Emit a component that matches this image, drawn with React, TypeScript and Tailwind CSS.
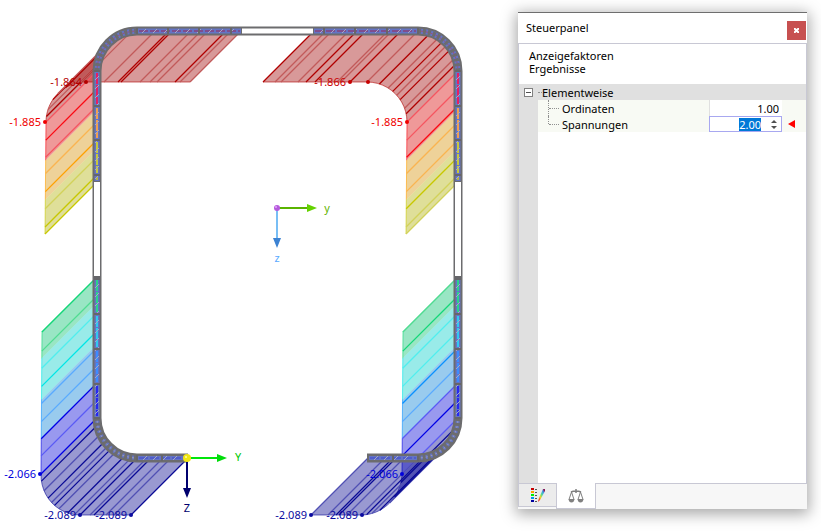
import { useState } from 'react';

type Point = [number, number];

const SHADES = {
  maroon: { fill: '#9e0000', line: '#b00000', soft: '#c25a5a' },
  red: { fill: '#d70000', line: '#fa0a14', soft: '#f55560' },
  orange: { fill: '#d58f00', line: '#ffa000', soft: '#fab450' },
  olive: { fill: '#afaf00', line: '#c8c800', soft: '#d2d25a' },
  green: { fill: '#00c06b', line: '#14d778', soft: '#50dc91' },
  cyan: { fill: '#00cdc8', line: '#00e6e6', soft: '#50eeee' },
  blue: { fill: '#007dd4', line: '#0a91ff', soft: '#5aaaff' },
  indigo: { fill: '#0000d7', line: '#0000e6', soft: '#5a5af5' },
  navy: { fill: '#00008c', line: '#0a0a96', soft: '#5050b4' },
};

type Shade = keyof typeof SHADES;

// Centre line of the section
const LEFT = 97;
const RIGHT = 458;
const TOP = 31;
const BOTTOM = 458;
const R = 40;

// Length of the stress ordinate at a given height
function ordinate(y: number) {
  if (y <= 71) return 51;
  if (y <= 182) return 51 + (y - 71) / 111;
  if (y <= 418) return 55 + (y - 276) / 142;
  return 56 + (y - 418) / 40;
}

function shifted([x, y]: Point): Point {
  const s = ordinate(y);
  return [x - s, y + s];
}

function arc(cx: number, cy: number, from: number, to: number): Point[] {
  const steps = 12;
  return Array.from({ length: steps + 1 }, (_, i) => {
    const a = ((from + ((to - from) * i) / steps) * Math.PI) / 180;
    return [cx + R * Math.cos(a), cy + R * Math.sin(a)];
  });
}

const toPoints = (pts: Point[]) => pts.map((p) => p.join(',')).join(' ');

function Band({ path, shade }: { path: Point[]; shade: Shade }) {
  const outer = path.map(shifted);
  const c = SHADES[shade];
  return (
    <g>
      <polygon points={toPoints([...path, ...outer.slice().reverse()])} fill={c.fill} fillOpacity={0.4} />
      <polyline points={toPoints(outer)} fill="none" stroke={c.line} strokeOpacity={0.6} />
    </g>
  );
}

function Ray({ at, shade, strong }: { at: Point; shade: Shade; strong?: boolean }) {
  const [x2, y2] = shifted(at);
  const c = SHADES[shade];
  return <line x1={at[0]} y1={at[1]} x2={x2} y2={y2} stroke={strong ? c.line : c.soft} strokeWidth={1.3} />;
}

const webBands: [number, number, Shade][] = [
  [71, 109, 'red'],
  [109, 148, 'orange'],
  [148, 182, 'olive'],
  [276, 303, 'green'],
  [303, 344, 'cyan'],
  [344, 383, 'blue'],
  [383, 418, 'indigo'],
];

const webRays: [number, Shade, boolean, boolean][] = [
  [71, 'red', false, false],
  [89, 'red', true, false],
  [106, 'red', false, true],
  [122, 'orange', false, false],
  [140, 'orange', true, false],
  [157, 'olive', false, true],
  [175, 'olive', true, false],
  [182, 'olive', true, false],
  [277, 'green', true, false],
  [296, 'green', false, true],
  [313, 'cyan', false, false],
  [331, 'cyan', true, false],
  [348, 'blue', false, true],
  [366, 'blue', false, false],
  [383, 'indigo', true, false],
  [400, 'indigo', false, true],
  [418, 'indigo', true, false],
];

const flangeRays: [number, number, Shade, boolean][] = [
  [155, TOP, 'maroon', false],
  [169, TOP, 'maroon', true],
  [172, TOP, 'maroon', true],
  [191, TOP, 'maroon', false],
  [201, TOP, 'maroon', false],
  [208, TOP, 'maroon', false],
  [226, TOP, 'maroon', true],
  [231, TOP, 'maroon', false],
  [241, TOP, 'maroon', false],
  [314, TOP, 'maroon', true],
  [326, TOP, 'maroon', false],
  [332, TOP, 'maroon', false],
  [349, TOP, 'maroon', false],
  [357, TOP, 'maroon', true],
  [366, TOP, 'maroon', true],
  [388, TOP, 'maroon', false],
  [392, TOP, 'maroon', false],
  [401, TOP, 'maroon', true],
  [418, TOP, 'maroon', false],
  [137, BOTTOM, 'navy', true],
  [147, BOTTOM, 'navy', false],
  [151, BOTTOM, 'navy', true],
  [163, BOTTOM, 'navy', false],
  [171, BOTTOM, 'navy', false],
  [188, BOTTOM, 'navy', true],
  [368, BOTTOM, 'navy', false],
  [385, BOTTOM, 'navy', false],
  [393, BOTTOM, 'navy', true],
  [396, BOTTOM, 'navy', true],
  [404, BOTTOM, 'navy', false],
  [418, BOTTOM, 'navy', false],
];

const corners: { cx: number; cy: number; shade: Shade; angles: number[] }[] = [
  { cx: 137, cy: 71, shade: 'maroon', angles: [188, 198, 214, 225, 240, 262] },
  { cx: 418, cy: 71, shade: 'maroon', angles: [-72, -58, -50, -42, -34, -20, -12] },
  { cx: 137, cy: 418, shade: 'navy', angles: [170, 156, 144, 136, 130, 122, 108, 98] },
  { cx: 418, cy: 418, shade: 'navy', angles: [82, 74, 62, 45, 34, 22, 12] },
];

const profileOutline =
  'M188 458 H137 A40 40 0 0 1 97 418 V71 A40 40 0 0 1 137 31 H418 A40 40 0 0 1 458 71 V418 A40 40 0 0 1 418 458 H367';

const filledParts: [string, number][] = [
  ['M97 181 V71 A40 40 0 0 1 137 31 H241', 5],
  ['M314 31 H418 A40 40 0 0 1 458 71 V181', 5],
  ['M97 278 V418', 5],
  ['M458 278 V418', 5],
  ['M97 418 A40 40 0 0 0 137 458 H186', 4],
  ['M458 418 A40 40 0 0 1 418 458 H369', 4],
];

const topTicks = [137, 168, 199, 231, 324, 355, 387, 418];
const sideTicks = [71, 106, 140, 175, 277, 279, 314, 349, 384, 418];
const bottomTicks = [137, 162, 393, 418];

const webCentre: [number, number, string][] = [
  [73, 104, '#e61e64'],
  [108, 138, '#f0a050'],
  [142, 173, '#c8c83c'],
  [177, 180, '#b4b446'],
  [280, 312, '#28d28c'],
  [316, 347, '#32c8f0'],
  [351, 382, '#3c8cff'],
  [386, 416, '#2828f0'],
];

// Short diagonal marks inside the plates
function Marks() {
  const marks: Point[] = [];
  for (let x = 144; x < 238; x += 11) marks.push([x, TOP]);
  for (let x = 322; x < 416; x += 11) marks.push([x, TOP]);
  for (let x = 145; x < 184; x += 10) marks.push([x, BOTTOM]);
  for (let x = 376; x < 416; x += 10) marks.push([x, BOTTOM]);
  for (const x of [LEFT, RIGHT]) {
    for (let y = 78; y < 180; y += 9) marks.push([x, y]);
    for (let y = 286; y < 416; y += 9) marks.push([x, y]);
  }
  return (
    <g stroke="#a4a8c4">
      {marks.map(([x, y]) => (
        <line key={`${x}-${y}`} x1={x - 2} y1={y + 2} x2={x + 2} y2={y - 2} />
      ))}
    </g>
  );
}

function Profile() {
  return (
    <g fill="none">
      <path d={profileOutline} stroke="#6c6c6e" strokeWidth={9} />
      {filledParts.map(([d, width]) => (
        <path key={d} d={d} stroke="#6474c4" strokeWidth={width} />
      ))}
      <line x1={242} y1={31} x2={313} y2={31} stroke="#fff" strokeWidth={5} />
      <line x1={LEFT} y1={182} x2={LEFT} y2={276} stroke="#fff" strokeWidth={6} />
      <line x1={RIGHT} y1={182} x2={RIGHT} y2={276} stroke="#fff" strokeWidth={6} />
      <path d="M139 31 H240 M315 31 H416" stroke="#96285a" strokeDasharray="9 2" />
      <path d="M139 458 H185 M370 458 H416" stroke="#3c46d2" strokeDasharray="9 2" />
      {webCentre.map(([from, to, color]) => (
        <path key={from} d={`M97 ${from} V${to} M458 ${from} V${to}`} stroke={color} strokeWidth={2} strokeDasharray="11 1" />
      ))}
      <Marks />
      {corners.map(({ cx, cy, shade }) => {
        const a = cx < 200 ? (cy < 200 ? 180 : 90) : cy < 200 ? 270 : 0;
        const pts = arc(cx, cy, a, a + 90);
        return (
          <g key={`${cx}-${cy}`}>
            <polyline points={toPoints(pts)} stroke="#6c6c6e" strokeWidth={5} strokeDasharray="3 2" />
            <polyline
              points={toPoints(pts)}
              stroke={shade === 'maroon' ? '#9c5078' : '#9a9ab8'}
              strokeDasharray="2 3"
              strokeDashoffset={2}
            />
          </g>
        );
      })}
      <g stroke="#66666a" strokeWidth={2}>
        {topTicks.map((x) => (
          <line key={x} x1={x} y1={28} x2={x} y2={34} />
        ))}
        {bottomTicks.map((x) => (
          <line key={x} x1={x} y1={455} x2={x} y2={461} />
        ))}
        {sideTicks.map((y) => (
          <path key={y} d={`M94 ${y} h6 M455 ${y} h6`} />
        ))}
      </g>
    </g>
  );
}

const labels: { x: number; y: number; text: string; color: string }[] = [
  { x: 86, y: 82, text: '-1.864', color: '#b40000' },
  { x: 350, y: 82, text: '-1.866', color: '#c80000' },
  { x: 45, y: 122, text: '-1.885', color: '#f00000' },
  { x: 407, y: 122, text: '-1.885', color: '#f00000' },
  { x: 40, y: 474, text: '-2.066', color: '#0000dc' },
  { x: 402, y: 474, text: '-2.066', color: '#0000dc' },
  { x: 80, y: 515, text: '-2.089', color: '#0a0aa0' },
  { x: 131, y: 515, text: '-2.089', color: '#0a0aa0' },
  { x: 311, y: 515, text: '-2.089', color: '#0a0aa0' },
  { x: 362, y: 515, text: '-2.089', color: '#0a0aa0' },
];

function Axes() {
  return (
    <g fontSize={11} textAnchor="middle">
      <line x1={188} y1={458} x2={218} y2={458} stroke="#00e60a" strokeWidth={2} />
      <polygon points="217,454 227,458 217,462" fill="#00dc0a" />
      <line x1={187} y1={458} x2={187} y2={489} stroke="#00006e" strokeWidth={2} />
      <polygon points="183,488 191,488 187,498" fill="#00006e" />
      <circle cx={187} cy={458} r={4} fill="#f0e614" />
      <circle cx={186} cy={457} r={1} fill="#ffffa0" />
      <text x={238} y={461} fill="#00c800">Y</text>
      <text x={187} y={512} fill="#00006e">Z</text>

      <line x1={277} y1={208} x2={308} y2={208} stroke="#5ab400" strokeWidth={2} />
      <polygon points="307,204 317,208 307,212" fill="#64d200" />
      <line x1={277} y1={208} x2={277} y2={239} stroke="#78bef5" strokeWidth={2} />
      <polygon points="273,238 281,238 277,248" fill="#3c82d2" />
      <circle cx={277} cy={208} r={3} fill="#b45adc" />
      <circle cx={276} cy={207} r={1} fill="#e6a0ff" />
      <text x={327} y={212} fill="#64b400">y</text>
      <text x={277} y={262} fill="#5aaaff">z</text>
    </g>
  );
}

function StressDiagram() {
  return (
    <svg viewBox="0 0 518 531" className="w-full h-auto font-['Noto_Sans',sans-serif]" role="img" aria-label="Spannungen">
      {[LEFT, RIGHT].map((x) => (
        <g key={x}>
          {webBands.map(([from, to, shade]) => (
            <Band key={shade} path={[[x, from], [x, to]]} shade={shade} />
          ))}
        </g>
      ))}

      {/* corners whose arc turns back on the ordinate direction are drawn in two halves */}
      <Band path={arc(137, 71, 180, 225)} shade="maroon" />
      <Band path={[...arc(137, 71, 225, 270), [241, TOP]]} shade="maroon" />
      <Band path={[[314, TOP], ...arc(418, 71, -90, 0)]} shade="maroon" />
      <Band path={[...arc(137, 418, 180, 90), [188, BOTTOM]]} shade="navy" />
      <Band path={arc(418, 418, 0, 45)} shade="navy" />
      <Band path={[...arc(418, 418, 45, 90), [368, BOTTOM]]} shade="navy" />

      {webRays.map(([y, shade, left, right]) => (
        <g key={y}>
          <Ray at={[LEFT, y]} shade={shade} strong={left} />
          <Ray at={[RIGHT, y]} shade={shade} strong={right} />
        </g>
      ))}
      {flangeRays.map(([x, y, shade, strong]) => (
        <Ray key={`${x}-${y}`} at={[x, y]} shade={shade} strong={strong} />
      ))}
      {corners.map(({ cx, cy, shade, angles }) =>
        angles.map((deg, i) => {
          const a = (deg * Math.PI) / 180;
          return (
            <Ray
              key={`${cx}-${cy}-${deg}`}
              at={[cx + R * Math.cos(a), cy + R * Math.sin(a)]}
              shade={shade}
              strong={i % 2 === 0}
            />
          );
        }),
      )}

      <Profile />
      <Axes />

      {labels.map(({ x, y, text, color }) => (
        <g key={`${x}-${y}`} fill={color}>
          <circle cx={x} cy={y} r={2} />
          <text x={x - 4} y={y + 4} fontSize={11} textAnchor="end">{text}</text>
        </g>
      ))}
      <circle cx={368} cy={82} r={2} fill="#c80000" />
    </svg>
  );
}

function ScaleIcon() {
  return (
    <svg width="16" height="16" viewBox="0 0 16 16" fill="none" stroke="#808080">
      <path d="M8 1v4M3 4q2-1 5-1t5 1" strokeWidth={1.5} />
      <path d="M3.5 4 1 11.5M3.5 4 6 11.5M12.5 4 10 11.5M12.5 4 15 11.5" />
      <path d="M.5 11h6q-.5 3.500-3 3.500t-3-3.500zM9.500 11h6q-.5 3.500-3 3.500t-3-3.500z" fill="#808080" stroke="none" />
    </svg>
  );
}

function ColorScaleIcon() {
  return (
    <svg width="16" height="16" viewBox="0 0 16 16">
      <defs>
        <linearGradient id="pen" x1="0" y1="1" x2="1" y2="0">
          <stop offset="0.1" stopColor="#f01414" />
          <stop offset="0.35" stopColor="#f5d21e" />
          <stop offset="0.55" stopColor="#50dc96" />
          <stop offset="0.75" stopColor="#3c96f0" />
          <stop offset="0.9" stopColor="#8c1450" />
        </linearGradient>
      </defs>
      <rect x="1" y="1" width="3" height="2" fill="#c80000" />
      <rect x="1" y="4" width="3" height="2" fill="#ffa000" />
      <rect x="1" y="7" width="3" height="2" fill="#00f000" />
      <rect x="1" y="10" width="3" height="2" fill="#0096f0" />
      <rect x="1" y="13" width="3" height="2" fill="#0000a0" />
      <path d="M5 2.500h2M5 5.500h2M5 8.500h2M5 11.500h2M5 14.500h2" stroke="#555" />
      <path d="M8 15l1-4 4-9 2 0 0 2-5 9z" fill="url(#pen)" />
    </svg>
  );
}

export default function App() {
  const [open, setOpen] = useState(true);
  const [ordinates, setOrdinates] = useState('1.00');
  const [stresses, setStresses] = useState('2.00');

  return (
    <div className="flex min-h-screen bg-white text-black font-['Noto_Sans',sans-serif] text-[11px] leading-4">
      <main className="flex-1 min-w-0">
        <StressDiagram />
      </main>

      <aside className="w-[289px] shrink-0 mt-3 mb-[22px] mr-[14px] flex flex-col bg-white border-t border-[#6e6e6e] shadow-[0_3px_14px_2px_rgba(0,0,0,0.35)]">
        <header className="h-[30px] shrink-0 flex items-center justify-between pl-2 pr-px">
          <h1>Steuerpanel</h1>
          <button aria-label="Schließen" className="w-[19px] h-[19px] mt-1 bg-[#c75050] text-white flex items-center justify-center">
            <svg width="5" height="5" viewBox="0 0 5 5" stroke="currentColor" strokeWidth="2">
              <path d="M0 0l5 5M5 0L0 5" />
            </svg>
          </button>
        </header>

        <div className="flex-1 flex flex-col border border-b-0 border-[#c8c8d4]">
          <div className="h-10 pt-[5px] pl-[10px] leading-[13px]">
            <p>Anzeigefaktoren</p>
            <p>Ergebnisse</p>
          </div>

          <div className="flex-1 flex">
            <div className="w-[19px] shrink-0 bg-[#e0e0e0] pt-1 pl-[5px]">
              <button
                aria-label="Elementweise ein- oder ausklappen"
                aria-expanded={open}
                onClick={() => setOpen(!open)}
                className="w-[9px] h-[9px] border border-[#808080] bg-white flex items-center justify-center"
              >
                <span className="w-[5px] border-t border-[#505050]" />
              </button>
            </div>

            <div className="flex-1">
              <table className="w-full table-fixed border-collapse">
                <colgroup>
                  <col />
                  <col className="w-[73px]" />
                  <col className="w-6" />
                </colgroup>
                <thead>
                  <tr className="h-4 bg-[#e0e0e0]">
                    <th colSpan={3} className="p-0 text-left font-normal">
                      <div className="flex items-center h-4">
                        <span className="w-1 border-t border-dotted border-[#909090]" />
                        <span className="pt-0.5">Elementweise</span>
                      </div>
                    </th>
                  </tr>
                </thead>
                {open && (
                  <tbody>
                    <tr className="h-4 bg-[#f8faf4]">
                      <td className="p-0">
                        <div className="flex items-center h-4 pl-[10px]">
                          <span className="h-4 border-l border-dotted border-[#909090]" />
                          <span className="w-[10px] mr-[3px] border-t border-dotted border-[#909090]" />
                          <label htmlFor="ordinaten" className="pt-0.5">Ordinaten</label>
                        </div>
                      </td>
                      <td className="p-0">
                        <div className="h-4 bg-white border-l border-[#e0e0e0] pr-[3px] flex">
                          <input
                            id="ordinaten"
                            value={ordinates}
                            onChange={(e) => setOrdinates(e.target.value)}
                            className="w-full h-4 p-0 pt-0.5 text-right outline-none"
                          />
                        </div>
                      </td>
                      <td className="p-0" />
                    </tr>
                    <tr className="h-4 bg-[#f8faf4]">
                      <td className="p-0">
                        <div className="flex items-center h-4 pl-[10px]">
                          <span className="h-2 self-start border-l border-dotted border-[#909090]" />
                          <span className="w-[10px] mr-[3px] border-t border-dotted border-[#909090]" />
                          <label htmlFor="spannungen" className="pt-0.5">Spannungen</label>
                        </div>
                      </td>
                      <td className="p-0">
                        <div className="h-4 bg-white border border-[#a8a8f0] flex items-center justify-end pr-1">
                          <input
                            id="spannungen"
                            value={stresses}
                            onChange={(e) => setStresses(e.target.value)}
                            className="field-sizing-content h-[13px] p-0 leading-[13px] text-right bg-[#0078d7] text-white outline-none"
                          />
                          <div className="ml-[10px] flex flex-col gap-[3px] text-[#505050]">
                            <button aria-label="Erhöhen" className="block">
                              <svg width="6" height="3" viewBox="0 0 6 3" fill="currentColor" className="block">
                                <path d="M0 3l3-3 3 3z" />
                              </svg>
                            </button>
                            <button aria-label="Verringern" className="block">
                              <svg width="6" height="3" viewBox="0 0 6 3" fill="currentColor" className="block">
                                <path d="M0 0l3 3 3-3z" />
                              </svg>
                            </button>
                          </div>
                        </div>
                      </td>
                      <td className="p-0">
                        <svg width="7" height="8" viewBox="0 0 7 8" fill="#f00" className="block ml-[6px]">
                          <path d="M7 0v8L0 4z" />
                        </svg>
                      </td>
                    </tr>
                  </tbody>
                )}
              </table>
            </div>
          </div>
        </div>

        <div role="tablist" className="h-[26px] shrink-0 flex bg-[#f7f7f7]">
          <button
            role="tab"
            aria-selected="false"
            aria-label="Farbskala"
            className="w-[38px] h-6 bg-[#ececec] border border-r-0 border-[#c8c8d4] flex items-center justify-center"
          >
            <ColorScaleIcon />
          </button>
          <button
            role="tab"
            aria-selected="true"
            aria-label="Anzeigefaktoren"
            className="w-10 bg-white border border-t-0 border-[#c8c8d4] flex items-center justify-center"
          >
            <ScaleIcon />
          </button>
          <div className="flex-1 border-t border-[#c8c8d4]" />
        </div>
      </aside>
    </div>
  );
}
